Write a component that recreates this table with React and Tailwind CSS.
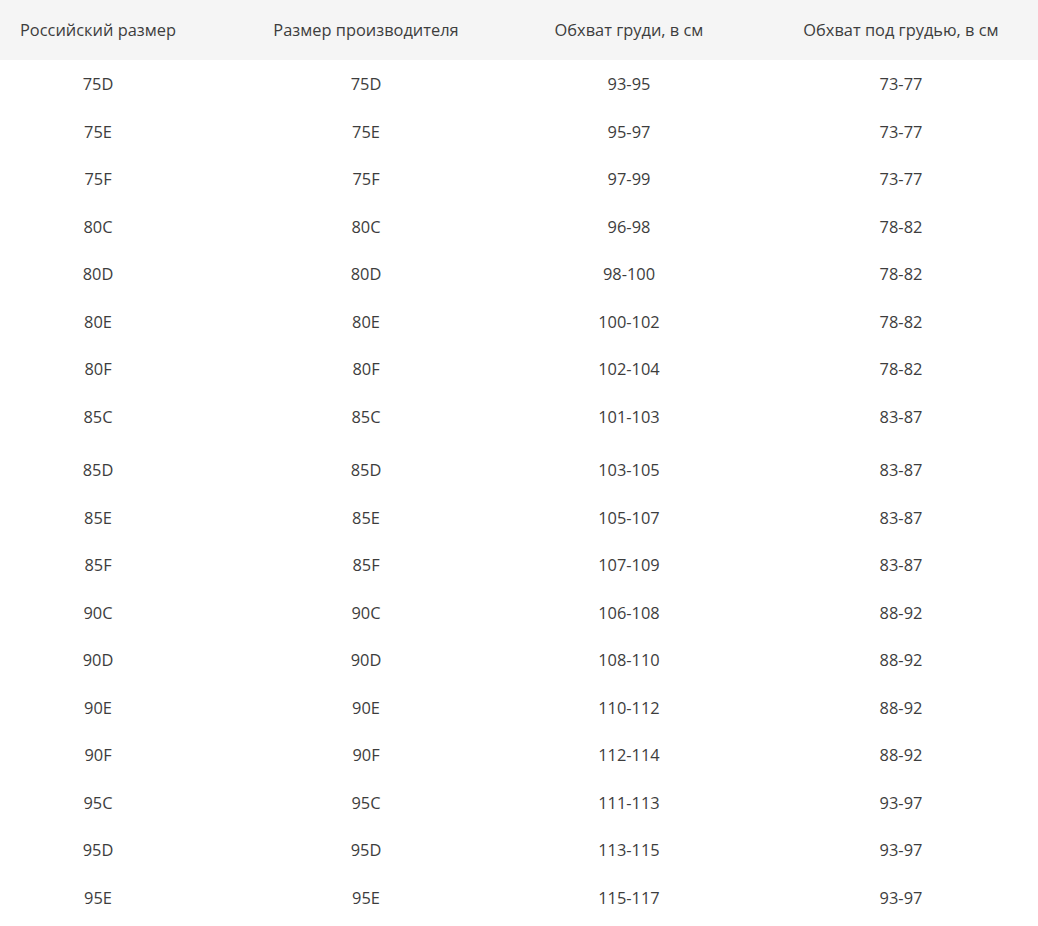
const rows = [
  ["75D", "75D", "93-95", "73-77"],
  ["75E", "75E", "95-97", "73-77"],
  ["75F", "75F", "97-99", "73-77"],
  ["80C", "80C", "96-98", "78-82"],
  ["80D", "80D", "98-100", "78-82"],
  ["80E", "80E", "100-102", "78-82"],
  ["80F", "80F", "102-104", "78-82"],
  ["85C", "85C", "101-103", "83-87"],
  ["85D", "85D", "103-105", "83-87"],
  ["85E", "85E", "105-107", "83-87"],
  ["85F", "85F", "107-109", "83-87"],
  ["90C", "90C", "106-108", "88-92"],
  ["90D", "90D", "108-110", "88-92"],
  ["90E", "90E", "110-112", "88-92"],
  ["90F", "90F", "112-114", "88-92"],
  ["95C", "95C", "111-113", "93-97"],
  ["95D", "95D", "113-115", "93-97"],
  ["95E", "95E", "115-117", "93-97"],
];

const headers = [
  "Российский размер",
  "Размер производителя",
  "Обхват груди, в см",
  "Обхват под грудью, в см",
];

const grid = "grid grid-cols-[196px_340px_186px_358px] w-[1080px]";

export default function App() {
  return (
    <div
      className="w-[1038px] h-[926px] overflow-hidden bg-white text-[#3d3d3d] text-[16.4px]"
      style={{ fontFamily: '"Open Sans", "Noto Sans", sans-serif' }}
    >
      <div className="bg-[#f5f5f5] w-[1038px]">
        <div className={`${grid} h-[60px] items-center pt-[1px]`}>
          {headers.map((h) => (
            <div key={h} className="text-center whitespace-nowrap">
              {h}
            </div>
          ))}
        </div>
      </div>
      {rows.map((r) => (
        <div
          key={r[0]}
          className={`${grid} items-center ${
            r[0] === "85D" ? "h-[53.5px] pt-[8px]" : "h-[47.5px] pt-[1.5px]"
          }`}
        >
          {r.map((c, i) => (
            <div key={i} className="text-center whitespace-nowrap">
              {c}
            </div>
          ))}
        </div>
      ))}
    </div>
  );
}
